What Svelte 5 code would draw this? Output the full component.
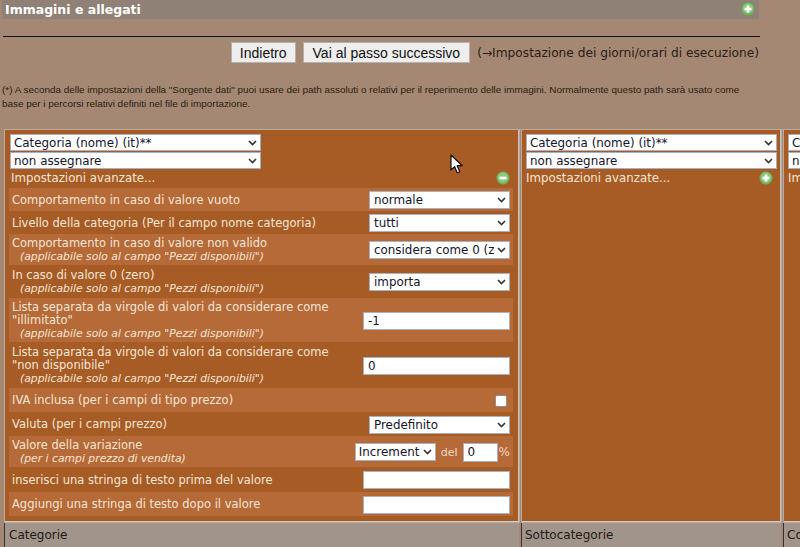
<script lang="ts">
  const note =
    '(*) A seconda delle impostazioni della "Sorgente dati" puoi usare dei path assoluti o relativi per il reperimento delle immagini. Normalmente questo path sarà usato come base per i percorsi relativi definiti nel file di importazione.';
  const onlyPieces = '(applicabile solo al campo "Pezzi disponibili")';

  const columns = [
    { title: 'Categorie', width: 514, open: true },
    { title: 'Sottocategorie', width: 259, open: false },
    { title: 'Collezioni', width: 259, open: false }
  ];

  const rows = [
    { label: 'Comportamento in caso di valore vuoto', kind: 'select', value: 'normale', h: 23 },
    { label: 'Livello della categoria (Per il campo nome categoria)', kind: 'select', value: 'tutti', h: 23 },
    { label: 'Comportamento in caso di valore non valido', hint: onlyPieces, kind: 'select', value: 'considera come 0 (zero)', h: 31 },
    { label: 'In caso di valore 0 (zero)', hint: onlyPieces, kind: 'select', value: 'importa', h: 33 },
    { label: 'Lista separata da virgole di valori da considerare come "illimitato"', hint: onlyPieces, kind: 'input', value: '-1', h: 44 },
    { label: 'Lista separata da virgole di valori da considerare come "non disponibile"', hint: onlyPieces, kind: 'input', value: '0', h: 46 },
    { label: 'IVA inclusa (per i campi di tipo prezzo)', kind: 'check', h: 24 },
    { label: 'Valuta (per i campi prezzo)', kind: 'select', value: 'Predefinito', h: 24 },
    { label: 'Valore della variazione', hint: '(per i campi prezzo di vendita)', kind: 'variation', h: 31 },
    { label: 'inserisci una stringa di testo prima del valore', kind: 'input', value: '', h: 25 },
    { label: 'Aggiungi una stringa di testo dopo il valore', kind: 'input', value: '', h: 24 }
  ];
</script>

{#snippet toggle(minus: boolean)}
  <svg class="toggle" width="14" height="14" viewBox="0 0 14 14">
    <circle cx="7" cy="7" r="6.5" fill="#6fb55f" />
    <circle cx="7" cy="6.5" r="5" fill="#8ccb7c" />
    <rect x="3.5" y="5.7" width="7" height="2.6" fill="#fff" />
    {#if !minus}
      <rect x="5.7" y="3.5" width="2.6" height="7" fill="#fff" />
    {/if}
  </svg>
{/snippet}

<div class="page">
  <header class="title-bar">
    <h1>Immagini e allegati</h1>
    {@render toggle(false)}
  </header>

  <hr class="rule" />

  <div class="actions">
    <button>Indietro</button>
    <button>Vai al passo successivo</button>
    <span class="next">(→Impostazione dei giorni/orari di esecuzione)</span>
  </div>

  <p class="note">{note}</p>

  <div class="columns">
    {#each columns as col}
      <section class="column" class:wide={col.open} style="width: {col.width}px">
        <div class="panel">
          <select class="map"><option>Categoria (nome) (it)**</option></select>
          <select class="map"><option>non assegnare</option></select>
          <div class="advanced">
            <span>Impostazioni avanzate...</span>
            {@render toggle(col.open)}
          </div>
          {#if col.open}
            <div class="rows">
              {#each rows as row}
                <div class="row" style="height: {row.h}px">
                  <div class="label">
                    {row.label}
                    {#if row.hint}<em>{row.hint}</em>{/if}
                  </div>
                  {#if row.kind === 'select'}
                    <select class="field"><option>{row.value}</option></select>
                  {:else if row.kind === 'input'}
                    <input class="text" type="text" value={row.value} />
                  {:else if row.kind === 'check'}
                    <input class="check" type="checkbox" />
                  {:else}
                    <div class="variation">
                      <select class="mode"><option>Incremento</option></select>
                      <span class="del">del</span>
                      <input class="amount" type="text" value="0" />
                      <span class="percent">%</span>
                    </div>
                  {/if}
                </div>
              {/each}
            </div>
          {/if}
        </div>
        <div class="foot">{col.title}</div>
      </section>
    {/each}
  </div>

  <svg class="cursor" width="13" height="21" viewBox="0 0 13 21">
    <path d="M1 1v15l3.6-3.4 2.6 6.2 2.6-1.1-2.6-6h5z" fill="#fff" stroke="#111" stroke-width="1.2" stroke-linejoin="round" />
  </svg>
</div>

<style>
  :global(body) {
    margin: 0;
    background: #a58873;
  }

  .page {
    position: relative;
    width: 800px;
    height: 547px;
    overflow: hidden;
    background: #a58873;
    font-family: 'DejaVu Sans', sans-serif;
  }

  .title-bar {
    display: flex;
    justify-content: space-between;
    align-items: center;
    width: 757px;
    height: 19px;
    margin-left: 2px;
    padding: 0 4px 1px 3px;
    box-sizing: border-box;
    background: #8f8175;
  }

  h1 {
    margin: 0;
    font-size: 12.5px;
    font-weight: bold;
    color: #fff;
  }

  .rule {
    width: 757px;
    height: 1px;
    margin: 17px 0 0 3px;
    border: 0;
    background: #111;
  }

  .actions {
    display: flex;
    justify-content: flex-end;
    align-items: center;
    width: 759px;
    height: 21px;
    margin-top: 5px;
    gap: 7px;
  }

  button {
    height: 21px;
    padding: 0 9px;
    border: 1px solid #b5b0aa;
    background: #eeeeee;
    color: #111;
    font: 14px 'Liberation Sans', Arial, sans-serif;
  }

  button:first-child {
    padding: 0 8px;
  }

  .next {
    font-size: 12.2px;
    white-space: nowrap;
    color: #2a1c12;
  }

  .note {
    width: 745px;
    margin: 20px 0 0 2px;
    font: 9.92px/14px 'Liberation Sans', Arial, sans-serif;
    color: #2a1c12;
  }

  .columns {
    display: flex;
    gap: 3px;
    margin: 18px 0 0 5px;
    width: 1100px;
    border-top: 1px solid #b3a597;
  }

  .column {
    flex: none;
  }

  .panel {
    height: 392px;
    padding: 4px 4px 0 4px;
    box-sizing: border-box;
    background: #a85c25;
    border-right: 1px solid #c9c2ba;
    border-bottom: 1px solid #d2cbc4;
    outline: 1px solid #b9ab9d;
  }

  .wide .panel {
    padding-left: 5px;
  }

  select,
  input {
    box-sizing: border-box;
    border: 1px solid #aab0c0;
    border-radius: 0;
    background-color: #fff;
    color: #14142b;
    font: 11.9px 'DejaVu Sans', sans-serif;
    padding: 0 0 0 4px;
    margin: 0;
  }

  select {
    appearance: none;
    padding-right: 15px;
    background-image: url("data:image/svg+xml,%3Csvg xmlns='http://www.w3.org/2000/svg' width='9' height='6'%3E%3Cpath d='M1 1l3.5 3.5L8 1' fill='none' stroke='%23333' stroke-width='1.6'/%3E%3C/svg%3E");
    background-repeat: no-repeat;
    background-position: right 3px center;
  }

  .map {
    display: block;
    width: 251px;
    height: 17px;
    margin-bottom: 1px;
    padding-left: 3px;
  }

  .advanced {
    display: flex;
    justify-content: space-between;
    align-items: center;
    width: 247px;
    height: 18px;
    padding: 0 0 3px 0;
    box-sizing: border-box;
    color: #f5e6d8;
    font-size: 11.8px;
  }

  .wide .advanced {
    width: 500px;
    padding-left: 1px;
  }

  .rows {
    width: 504px;
    margin-left: -1px;
  }

  .row {
    display: flex;
    justify-content: space-between;
    align-items: center;
    padding: 1px 3px 0;
    box-sizing: border-box;
    color: #f5e6d8;
    font-size: 11.5px;
    line-height: 13px;
  }

  .row:nth-child(odd) {
    background: #b56a37;
  }

  .label {
    width: 345px;
  }

  em {
    display: block;
    padding-left: 8px;
    font-size: 10.8px;
  }

  .field {
    width: 141px;
    height: 18px;
  }

  .text {
    width: 147px;
    height: 18px;
  }

  .check {
    appearance: none;
    width: 12px;
    height: 12px;
    margin-right: 3px;
    padding: 0;
    border: 1px solid #8f8f8f;
    border-radius: 2px;
  }

  .variation {
    display: flex;
    align-items: center;
    color: #f2d9c6;
    font-size: 12px;
  }

  .mode {
    width: 81px;
    height: 18px;
    padding-left: 3px;
    padding-right: 15px;
  }

  .del {
    margin: 0 5px;
    font-size: 11px;
  }

  .amount {
    width: 35px;
    height: 19px;
  }

  .percent {
    margin-left: 1px;
  }

  .foot {
    height: 25px;
    margin-left: -1px;
    padding: 5px 0 0 3px;
    box-sizing: border-box;
    border-top: 1px solid #1c1c1c;
    border-left: 1px solid #333;
    background: #a1948a;
    color: #1f1a16;
    font-size: 12px;
  }

  .wide .foot {
    padding-left: 4px;
  }

  .toggle {
    flex: none;
  }

  .cursor {
    position: absolute;
    left: 450px;
    top: 154px;
  }
</style>
